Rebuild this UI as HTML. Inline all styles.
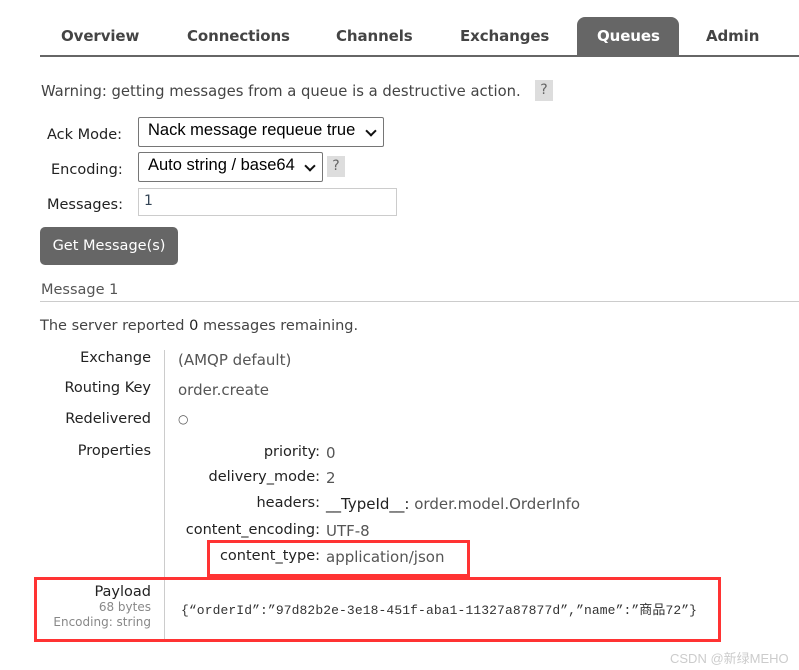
<!DOCTYPE html>
<html><head><meta charset="utf-8"><style>
body{margin:0;width:799px;height:670px;background:#fff;position:relative;font-family:"DejaVu Sans","Liberation Sans",sans-serif;color:#444;overflow:hidden}
.a{position:absolute;white-space:nowrap}
.tab{position:absolute;top:27px;font-weight:bold;font-size:15px;color:#444;font-family:"DejaVu Sans","Liberation Sans",sans-serif;letter-spacing:-0.1px}
.sel{position:absolute;border:1px solid #767676;border-radius:2px;font-size:16.5px;color:#000;box-sizing:border-box;padding:3px 9px;font-family:"Liberation Sans",sans-serif}
.q{position:absolute;background:#ddd;color:#666;font-size:14px;width:18px;height:21px;text-align:center;line-height:21px}
.lbl{position:absolute;right:648px;font-size:14.5px;color:#222;text-align:right;white-space:nowrap}
.val{position:absolute;left:178px;font-size:15px;color:#555;white-space:nowrap}
.pk{position:absolute;right:479px;font-size:14.5px;color:#222;white-space:nowrap}
.pv{position:absolute;left:326px;font-size:15px;color:#555;white-space:nowrap}
.red{position:absolute;border:3px solid #f33;box-sizing:border-box}
.chev{position:absolute;right:8px;top:9px;width:6px;height:6px;border-right:2px solid #111;border-bottom:2px solid #111;transform:rotate(45deg)}
</style></head><body>
<div class="a" style="left:40px;top:55px;width:759px;height:2px;background:#666"></div>
<div class="a" style="left:577px;top:17px;width:102px;height:39px;background:#666;border-radius:8px 8px 0 0"></div>
<div class="tab" style="left:61px">Overview</div>
<div class="tab" style="left:187px">Connections</div>
<div class="tab" style="left:336px">Channels</div>
<div class="tab" style="left:460px">Exchanges</div>
<div class="tab" style="left:597px;color:#fff">Queues</div>
<div class="tab" style="left:706px">Admin</div>

<div class="a" style="left:41px;top:83px;font-size:14.8px">Warning: getting messages from a queue is a destructive action.</div>
<div class="q" style="left:535px;top:80px">?</div>

<div class="a" style="left:47px;top:127px;font-size:14.5px;color:#222">Ack Mode:</div>
<div class="sel" style="left:138px;top:117px;width:246px;height:30px">Nack message requeue true <span class="chev"></span></div>
<div class="a" style="left:51px;top:162px;font-size:14.5px;color:#222">Encoding:</div>
<div class="sel" style="left:138px;top:152px;width:185px;height:30px">Auto string / base64 <span class="chev"></span></div>
<div class="q" style="left:327px;top:156px">?</div>
<div class="a" style="left:47px;top:197px;font-size:14.5px;color:#222">Messages:</div>
<div class="a" style="left:138px;top:188px;width:259px;height:28px;border:1px solid #ccc;box-sizing:border-box;font-size:14px;color:#345;padding:4px 5px">1</div>
<div class="a" style="left:40px;top:227px;width:138px;height:38px;background:#666;border-radius:5px;color:#fff;font-size:14.5px;line-height:38px;text-align:center">Get Message(s)</div>

<div class="a" style="left:41px;top:282px;font-size:14.5px;color:#555">Message 1</div>
<div class="a" style="left:40px;top:301px;width:759px;height:1px;background:#ccc"></div>
<div class="a" style="left:40px;top:318px;font-size:14.5px">The server reported <span style="color:#222">0</span> messages remaining.</div>

<div class="a" style="left:164px;top:350px;width:1px;height:292px;background:#ccc"></div>
<div class="lbl" style="top:350px">Exchange</div><div class="val" style="top:351px">(AMQP default)</div>
<div class="lbl" style="top:380px">Routing Key</div><div class="val" style="top:381px">order.create</div>
<div class="lbl" style="top:411px">Redelivered</div><div class="val" style="top:412px;font-size:12px">○</div>
<div class="lbl" style="top:443px">Properties</div>
<div class="pk" style="top:444px">priority:</div><div class="pv" style="top:444px">0</div>
<div class="pk" style="top:469px">delivery_mode:</div><div class="pv" style="top:469px">2</div>
<div class="pk" style="top:495px">headers:</div><div class="pv" style="top:495px;color:#222">__TypeId__: <span style="color:#555">order.model.OrderInfo</span></div>
<div class="pk" style="top:522px">content_encoding:</div><div class="pv" style="top:522px">UTF-8</div>
<div class="pk" style="top:548px">content_type:</div><div class="pv" style="top:548px">application/json</div>

<div class="lbl" style="top:584px">Payload</div>
<div class="lbl" style="top:600px;font-size:12px;color:#888">68 bytes</div>
<div class="lbl" style="top:615px;font-size:12px;color:#888">Encoding: string</div>
<div class="a" style="left:181px;top:599px;font-size:13px;color:#333;font-family:'Liberation Mono','Noto Sans CJK SC',monospace;letter-spacing:0.1px">{“orderId”:”97d82b2e-3e18-451f-aba1-11327a87877d”,”name”:”商品72”}</div>

<div class="red" style="left:207px;top:540px;width:263px;height:37px"></div>
<div class="red" style="left:34px;top:577px;width:687px;height:65px"></div>
<div class="a" style="left:670px;top:648px;font-size:13px;color:#ccc;font-family:'Liberation Sans','Noto Sans CJK SC',sans-serif">CSDN @新绿MEHO</div>
</body></html>
